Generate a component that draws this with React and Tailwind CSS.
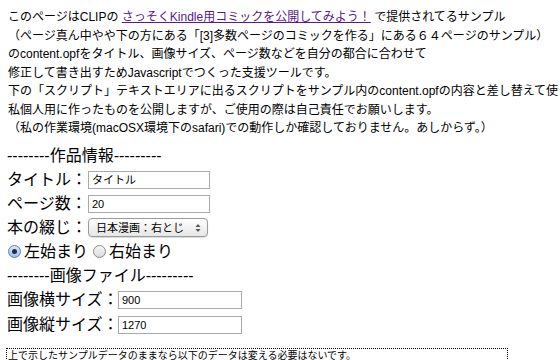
import React from "react";

const jp = { fontFamily: '"Liberation Sans", "Noto Sans CJK JP", sans-serif' };

function Radio({ checked }) {
  return checked ? (
    <span className="inline-flex items-center justify-center w-[13px] h-[13px] rounded-full border border-[#5d7fb0] bg-gradient-to-b from-[#dbe9f9] to-[#9cc0e8] mx-[1px]">
      <span className="w-[5px] h-[5px] rounded-full bg-[#1c2f4f]" />
    </span>
  ) : (
    <span className="inline-flex items-center justify-center w-[13px] h-[13px] rounded-full border border-[#8a8a8a] bg-gradient-to-b from-[#f6f6f6] to-[#dcdcdc] mx-[1px]" />
  );
}

function TextInput({ value, w = "w-[122px]" }) {
  return (
    <div className={`${w} h-[18px] border border-[#a9a9a9] bg-white flex items-center px-[3px] text-[11px] text-black`}>
      {value}
    </div>
  );
}

export default function App() {
  return (
    <div className="w-[560px] h-[360px] overflow-hidden bg-white text-black relative" style={jp}>
      <div className="pl-2 pt-2 text-[12px] leading-[18.5px] whitespace-nowrap">
        <div>
          このページはCLIPの{" "}
          <span className="text-[#551a8b] underline">さっそくKindle用コミックを公開してみよう！</span>{" "}
          で提供されてるサンプル
        </div>
        <div>（ページ真ん中やや下の方にある「[3]多数ページのコミックを作る」にある６４ページのサンプル）</div>
        <div>のcontent.opfをタイトル、画像サイズ、ページ数などを自分の都合に合わせて</div>
        <div>修正して書き出すためJavascriptでつくった支援ツールです。</div>
        <div>下の「スクリプト」テキストエリアに出るスクリプトをサンプル内のcontent.opfの内容と差し替えて使ってください。</div>
        <div>私個人用に作ったものを公開しますが、ご使用の際は自己責任でお願いします。</div>
        <div>（私の作業環境(macOSX環境下のsafari)での動作しか確認しておりません。あしからず。）</div>
      </div>

      <div className="pl-[7px] mt-[6px] text-[16px] leading-[24px] whitespace-nowrap">
        <div className="h-6">--------作品情報---------</div>
        <div className="h-6 flex items-center">
          <span className="w-[81px]">タイトル：</span>
          <TextInput value="タイトル" />
        </div>
        <div className="h-6 flex items-center">
          <span className="w-[81px]">ページ数：</span>
          <TextInput value="20" />
        </div>
        <div className="h-6 flex items-center">
          <span className="w-[81px]">本の綴じ：</span>
          <div className="w-[120px] h-[19px] rounded-[4px] border border-[#9a9a9a] bg-gradient-to-b from-[#ffffff] to-[#e6e6e6] flex items-center pl-[7px] pr-[6px] text-[11px] shadow-[0_1px_1px_rgba(0,0,0,0.15)]">
            <span className="flex-1">日本漫画：右とじ</span>
            <svg width="6" height="10" viewBox="0 0 6 10">
              <path d="M3 1 L5.5 4 H0.5 Z" fill="#555" />
              <path d="M3 9 L5.5 6 H0.5 Z" fill="#555" />
            </svg>
          </div>
        </div>
        <div className="h-6 flex items-center">
          <Radio checked />
          <span className="ml-[2px]">左始まり</span>
          <span className="ml-[4px] inline-flex"><Radio /></span>
          <span className="ml-[2px]">右始まり</span>
        </div>
        <div className="h-6">--------画像ファイル---------</div>
        <div className="h-[25px] flex items-center">
          <span className="w-[111px]">画像横サイズ：</span>
          <TextInput value="900" w="w-[124px]" />
        </div>
        <div className="h-[25px] flex items-center">
          <span className="w-[111px]">画像縦サイズ：</span>
          <TextInput value="1270" w="w-[124px]" />
        </div>
      </div>

      <div className="ml-[6px] mt-[10px] w-[502px] border border-dotted border-black px-[1px] text-[10px] leading-[13px] whitespace-nowrap">
        上で示したサンプルデータのままなら以下のデータは変える必要はないです。
      </div>
    </div>
  );
}
